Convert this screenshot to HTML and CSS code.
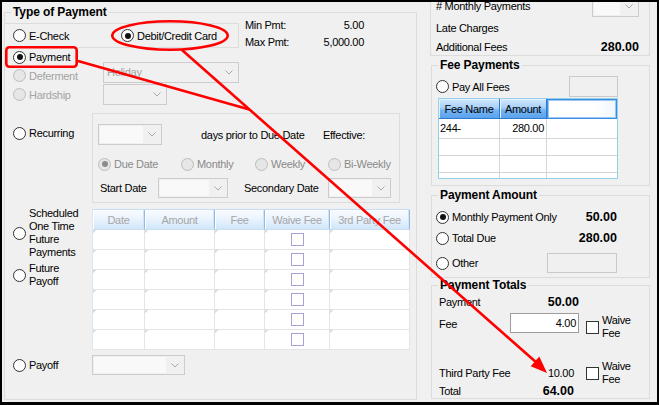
FILE: index.html
```html
<!DOCTYPE html>
<html lang="en">
<head>
<meta charset="utf-8">
<title>Type of Payment</title>
<link rel="stylesheet" href="styles.css">
</head>
<body>
<div class="page">
<div class="frame">
 <div class="leftcol">
  <div class="group tgroup">
   <div class="legend">Type of Payment</div>
   <div class="r1">
    <div class="typepanel">
     <div class="rb w108"><span class="radio"></span>E-Check</div>
     <div class="rb"><span class="radio on"></span>Debit/Credit Card</div>
    </div>
    <div class="minmax">
     <div class="mm"><span>Min Pmt:</span><span>5.00</span></div>
     <div class="mm"><span>Max Pmt:</span><span>5,000.00</span></div>
    </div>
   </div>
   <div class="r2">
    <div class="colA">
     <div class="rb h18"><span class="radio on"></span>Payment</div>
     <div class="rb h19 dis"><span class="radio"></span>Deferment</div>
     <div class="rb h19 dis"><span class="radio"></span>Hardship</div>
    </div>
    <div class="colB">
     <div class="combo plain c-hol"><span class="cv">Holiday</span><span class="ca"><svg width="8" height="5" viewBox="0 0 8 5"><path d="M.5.5 4 4 7.5.5" fill="none" stroke="#a9a9a9"/></svg></span></div>
     <div class="combo plain c-hard"><span class="cv"></span><span class="ca"><svg width="8" height="5" viewBox="0 0 8 5"><path d="M.5.5 4 4 7.5.5" fill="none" stroke="#a9a9a9"/></svg></span></div>
    </div>
   </div>
   <div class="r3">
    <div class="rb lab3"><span class="radio"></span>Recurring</div>
    <div class="recpanel">
     <div class="ra">
      <div class="combo c-rec"><span class="cv"></span><span class="ca"><svg width="8" height="5" viewBox="0 0 8 5"><path d="M.5.5 4 4 7.5.5" fill="none" stroke="#a9a9a9"/></svg></span></div>
      <span class="days">days prior to Due Date</span>
      <span>Effective:</span>
     </div>
     <div class="rbrow dis2">
      <div class="rb w83"><span class="radio on"></span>Due Date</div>
      <div class="rb w74"><span class="radio"></span>Monthly</div>
      <div class="rb w73"><span class="radio"></span>Weekly</div>
      <div class="rb"><span class="radio"></span>Bi-Weekly</div>
     </div>
     <div class="rc">
      <span class="sd">Start Date</span>
      <div class="combo c-sd"><span class="cv"></span><span class="ca"><svg width="8" height="5" viewBox="0 0 8 5"><path d="M.5.5 4 4 7.5.5" fill="none" stroke="#a9a9a9"/></svg></span></div>
      <span class="sec">Secondary Date</span>
      <div class="combo c-sec"><span class="cv"></span><span class="ca"><svg width="8" height="5" viewBox="0 0 8 5"><path d="M.5.5 4 4 7.5.5" fill="none" stroke="#a9a9a9"/></svg></span></div>
     </div>
    </div>
   </div>
   <div class="r4">
    <div class="left4">
     <div class="rb sched"><span class="radio"></span><span class="ml">Scheduled<br>One Time<br>Future<br>Payments</span></div>
     <div class="rb fut"><span class="radio"></span><span class="ml">Future<br>Payoff</span></div>
    </div>
    <div class="sgrid">
     <div class="sh">Date</div><div class="sh">Amount</div><div class="sh">Fee</div><div class="sh">Waive Fee</div><div class="sh">3rd Party Fee</div>
     <div class="sc"></div><div class="sc"></div><div class="sc"></div><div class="sc"><span class="scb"></span></div><div class="sc"></div>
     <div class="sc"></div><div class="sc"></div><div class="sc"></div><div class="sc"><span class="scb"></span></div><div class="sc"></div>
     <div class="sc"></div><div class="sc"></div><div class="sc"></div><div class="sc"><span class="scb"></span></div><div class="sc"></div>
     <div class="sc"></div><div class="sc"></div><div class="sc"></div><div class="sc"><span class="scb"></span></div><div class="sc"></div>
     <div class="sc"></div><div class="sc"></div><div class="sc"></div><div class="sc"><span class="scb"></span></div><div class="sc"></div>
     <div class="sc"></div><div class="sc"></div><div class="sc"></div><div class="sc"><span class="scb"></span></div><div class="sc"></div>
    </div>
   </div>
   <div class="r5">
    <div class="rb lab5"><span class="radio"></span>Payoff</div>
    <div class="combo c-pay"><span class="cv"></span><span class="ca"><svg width="8" height="5" viewBox="0 0 8 5"><path d="M.5.5 4 4 7.5.5" fill="none" stroke="#a9a9a9"/></svg></span></div>
   </div>
  </div>
 </div>

 <div class="rightcol">
  <div class="topbox">
   <div class="tr1"><span># Monthly Payments</span><div class="combo c-mon"><span class="cv"></span><span class="ca"><svg width="8" height="5" viewBox="0 0 8 5"><path d="M.5.5 4 4 7.5.5" fill="none" stroke="#a9a9a9"/></svg></span></div></div>
   <div class="tr2">Late Charges</div>
   <div class="tr3"><span>Additional Fees</span><b class="val">280.00</b></div>
  </div>

  <div class="group fgroup">
   <div class="legend">Fee Payments</div>
   <div class="pay"><div class="rb"><span class="radio"></span>Pay All Fees</div><span class="tb dtb"></span></div>
   <div class="fgrid">
    <div class="fh">Fee Name</div><div class="fh">Amount</div><div class="fh sel"></div>
    <div class="fc">244-</div><div class="fc num">280.00</div><div class="fc"></div>
    <div class="fc"></div><div class="fc"></div><div class="fc"></div>
    <div class="fc"></div><div class="fc"></div><div class="fc"></div>
    <div class="fc"></div><div class="fc"></div><div class="fc"></div>
   </div>
  </div>

  <div class="group pagroup">
   <div class="legend">Payment Amount</div>
   <div class="pm pm1"><div class="rb"><span class="radio on"></span>Monthly Payment Only</div><b class="val">50.00</b></div>
   <div class="pm pm2"><div class="rb"><span class="radio"></span>Total Due</div><b class="val">280.00</b></div>
   <div class="pm pm3"><div class="rb"><span class="radio"></span>Other</div><span class="tb dtb"></span></div>
  </div>

  <div class="group ptgroup">
   <div class="legend">Payment Totals</div>
   <div class="pt pt1"><span class="lc">Payment</span><b class="vc">50.00</b></div>
   <div class="pt pt2"><span class="lc">Fee</span><span class="etb">4.00</span><div class="wv"><span class="cb"></span><span class="ml">Waive<br>Fee</span></div></div>
   <div class="pt pt3"><span class="lc">Third Party Fee</span><span class="vc pr5">10.00</span><div class="wv"><span class="cb"></span><span class="ml">Waive<br>Fee</span></div></div>
   <div class="pt pt4"><span class="lc">Total</span><b class="vc pr5">64.00</b></div>
  </div>
 </div>
</div>

<svg class="anno" width="659" height="405" viewBox="0 0 659 405">
 <g fill="none" stroke="#f00" stroke-width="2.6">
  <rect x="6.3" y="47.3" width="70.4" height="19.4" rx="3"/>
  <ellipse cx="170" cy="35.5" rx="57.7" ry="14.3"/>
  <path d="M78 61 L249.4 109.5"/>
  <path d="M182 50 L537 363"/>
 </g>
 <polygon points="547,373 530.7,366.3 539.3,356.5" fill="#f00"/>
</svg>
</div>
</body>
</html>
```

FILE: styles.css
```css
* { box-sizing: border-box; }
html, body { margin: 0; padding: 0; }
body {
  background: #f0f0f0;
  font-family: "Liberation Sans", Arial, Helvetica, sans-serif;
  font-size: 11px;
  letter-spacing: -0.3px;
  color: #000;
}
.page { position: relative; width: 659px; height: 405px; }
.frame {
  width: 659px; height: 405px;
  border: solid #000; border-width: 2px 2px 3px 2px;
  background: #f0f0f0;
  display: flex;
  overflow: hidden;
}
.anno { position: absolute; left: 0; top: 0; pointer-events: none; }

.leftcol { flex: none; width: 415px; padding: 10px 0 0 2px; }
.rightcol { flex: none; width: 220px; margin-left: 13px; }

.group { border: 1px solid #dcdcdc; }
.tgroup { width: 413px; height: 388px; }
.legend {
  width: max-content;
  margin: -8px 0 0 6px;
  padding: 0 2px;
  height: 14px; line-height: 14px;
  background: #f0f0f0;
  font-weight: bold; font-size: 12px; letter-spacing: -0.1px;
}

.rb { display: flex; align-items: center; white-space: nowrap; }
.radio {
  flex: none; width: 13px; height: 13px; margin-right: 3px;
  border: 1px solid #333; border-radius: 50%; background: #fff;
  display: flex; align-items: center; justify-content: center;
}
.radio.on::after { content: ""; width: 6px; height: 6px; border-radius: 50%; background: #111; }
.dis { color: #a3a3a3; }
.dis2 { color: #8a8a8a; }
.dis .radio, .dis2 .radio { border-color: #bcbcbc; background: #e6e6e6; }
.dis .radio.on::after, .dis2 .radio.on::after { background: #8c8c8c; }

.combo { flex: none; display: flex; border: 1px solid #cccccc; background: #f0f0f0; }
.cv { flex: 1; margin: 1px 0 1px 1px; background: #f9f9f9; }
.plain .cv { background: none; margin: 0; padding-left: 3px; color: #a3a3a3; line-height: 19px; }
.ca { flex: none; width: 18px; display: flex; align-items: center; justify-content: center; }
.ca svg { display: block; }
.c-hol { margin-top: 14px; width: 136px; height: 21px; }
.c-hard { margin-top: 1px; width: 64px; height: 21px; }
.c-rec { width: 64px; height: 21px; }
.c-sd { width: 70px; height: 20px; }
.c-sec { width: 63px; height: 20px; }
.c-pay { width: 93px; height: 20px; }
.c-mon { width: 47px; height: 21px; margin: -3px 0 0 auto; }

/* left group rows */
.r1 { display: flex; align-items: flex-start; }
.typepanel {
  flex: none; margin: 4px 0 0 -1px; width: 235px; height: 25px;
  border: 1px solid #dcdcdc; display: flex; align-items: center; padding-left: 8px;
}
.w108 { width: 108px; }
.minmax { flex: none; width: 119px; margin: -2px 0 -6px 6px; }
.mm { display: flex; justify-content: space-between; height: 17px; line-height: 17px; }

.r2 { display: flex; }
.colA { flex: none; width: 98px; padding-left: 8px; }
.h18 { height: 18px; }
.h19 { height: 19px; }
.colB { display: flex; flex-direction: column; align-items: flex-start; }

.r3 { display: flex; align-items: flex-start; margin-top: 8px; }
.lab3 { flex: none; width: 87px; height: 18px; margin-top: 11px; padding-left: 8px; }
.recpanel { flex: none; width: 308px; height: 90px; border: 1px solid #dcdcdc; padding-left: 5px; }
.ra { display: flex; align-items: center; height: 21px; margin-top: 10px; white-space: nowrap; }
.days { margin-left: 39px; width: 122px; }
.rbrow { display: flex; height: 18px; margin-top: 10px; }
.w83 { width: 83px; }
.w74 { width: 74px; }
.w73 { width: 73px; }
.rc { display: flex; align-items: center; height: 20px; margin-top: 5px; white-space: nowrap; }
.sd { width: 60px; padding-left: 2px; }
.sec { width: 84px; margin-left: 16px; }

.r4 { display: flex; align-items: flex-start; }
.left4 { flex: none; width: 87px; padding-left: 8px; }
.ml { line-height: 13px; }
.sched { margin-top: 4px; }
.fut { margin-top: 3px; }
.sgrid {
  margin-top: 6px;
  display: grid;
  grid-template-columns: 52px 70px 50px 65px 80px;
  grid-auto-rows: 20px;
  border-left: 1px solid #dbe8f3;
  border-top: 1px solid #c5def3;
}
.sh {
  display: flex; align-items: center; justify-content: center;
  white-space: nowrap;
  color: #a6a6a6;
  background: linear-gradient(#fafcff, #e9f3fd 50%, #d0e6fa);
  border-right: 1px solid #8fbbe6;
  border-bottom: 1px solid #c9dff2;
  box-shadow: inset -1px 0 0 #cfe4f8, inset 1px 0 0 #fff;
}
.sc {
  display: flex; align-items: center; justify-content: center;
  background: #fff linear-gradient(135deg, #dadada 0, #dadada 2px, transparent 2.5px) no-repeat 0 0 / 5px 5px;
  border-right: 1px solid #e4e4e4;
  border-bottom: 1px solid #e4e4e4;
}
.scb { width: 13px; height: 13px; border: 1px solid #a4a3d3; background: #fff; }

.r5 { display: flex; align-items: center; height: 20px; margin-top: 5px; }
.lab5 { flex: none; width: 87px; padding-left: 8px; }

/* right column */
.topbox { margin-top: -3px; border: 1px solid #dcdcdc; border-top: 0; padding: 0 10px 0 5px; white-space: nowrap; }
.tr1 { display: flex; align-items: flex-start; height: 14px; line-height: 14px; }
.tr2 { margin-top: 7px; height: 17px; line-height: 17px; }
.tr3 { margin-top: 3px; height: 15px; line-height: 15px; display: flex; justify-content: space-between; }
.val { font-weight: bold; font-size: 12.5px; letter-spacing: 0; }

.tb { display: block; flex: none; }
.dtb { border: 1px solid #c9c9c9; background: #f0f0f0; }

.fgroup { margin: 9px 0 0 1px; }
.pay { display: flex; align-items: center; height: 21px; margin-top: 4px; padding-left: 4px; }
.pay .tb { margin: 0 31px 0 auto; width: 49px; height: 21px; }
.fgrid {
  margin: 1px 0 6px 6px; width: 180px; height: 81px;
  border: 1px solid #94d0ea;
  display: grid;
  grid-template-columns: 61px 47px 70px;
  grid-template-rows: 20px 20px 17px 17px 17px;
  overflow: hidden; background: #fff;
  white-space: nowrap;
}
.fh {
  display: flex; align-items: center; justify-content: center;
  background: linear-gradient(#d3e8fd, #a9d0f8 45%, #74b3f1 60%, #5aa3ee);
  border-right: 1px solid #2c7bd1;
  border-bottom: 1px solid #2c7bd1;
  box-shadow: inset 1px 1px 0 #e4f1fe;
}
.fh.sel {
  background: linear-gradient(90deg, #fff, #fff 70%, #eef6fe);
  border: 1px solid #3a8de3;
  box-shadow: inset 0 0 0 1px #9cc8f3;
}
.fc { border-right: 1px solid #d6d6d6; border-bottom: 1px solid #d6d6d6; line-height: 19px; padding: 0 2px 0 1px; }
.fc:nth-child(3n) { border-right: 0; }
.num { text-align: right; }

.pagroup { margin: 9px 0 0 1px; padding-bottom: 4px; }
.pm { display: flex; align-items: center; justify-content: space-between; padding: 0 32px 0 4px; white-space: nowrap; }
.pm1 { margin-top: 6px; height: 18px; }
.pm2 { margin-top: 3px; height: 18px; }
.pm3 { margin-top: 6px; height: 20px; }
.pm3 .tb { width: 70px; height: 20px; }

.ptgroup { margin: 7px 0 0 1px; height: 114px; }
.pt { display: flex; padding-left: 7px; white-space: nowrap; }
.pt1 { margin-top: 1px; height: 17px; align-items: center; }
.pt2 { margin-top: 3px; height: 20px; align-items: flex-start; }
.pt3 { margin-top: 30px; height: 20px; align-items: center; }
.pt4 { margin-top: 1px; height: 14px; align-items: center; }
.lc { flex: none; width: 71px; white-space: nowrap; }
.pt2 .lc { line-height: 22px; }
.vc { flex: none; width: 69px; text-align: right; }
b.vc { font-size: 12.5px; letter-spacing: 0; }
.pr5 { padding-right: 5px; }
.etb {
  flex: none; width: 69px; height: 20px;
  border: 1px solid #9d9d9d; background: #fff;
  text-align: right; padding-right: 2px; line-height: 18px;
}
.wv { display: flex; align-items: center; margin-left: 7px; }
.pt2 .wv { margin-top: 1px; }
.cb { flex: none; width: 13px; height: 13px; border: 1px solid #333; background: #fff; margin-right: 3px; }
```
